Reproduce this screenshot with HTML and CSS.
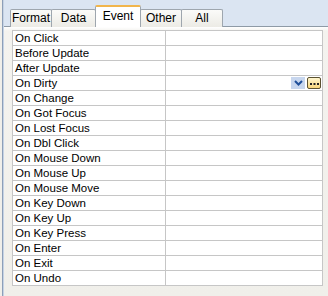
FILE: index.html
```html
<!DOCTYPE html>
<html lang="en">
<head>
    <meta charset="UTF-8">
    <title>Property Sheet - Event</title>
    <link rel="stylesheet" href="styles.css">
</head>
<body>
    <div class="sheet">
        <!-- tabs -->
        <div class="tabs">
            <div class="tab">Format</div>
            <div class="tab">Data</div>
            <div class="tab active">Event</div>
            <div class="tab">Other</div>
            <div class="tab">All</div>
        </div>

        <!-- property grid -->
        <div class="panel">
            <table class="grid">
                <tr><td class="name">On Click</td><td class="value"></td></tr>
                <tr><td class="name">Before Update</td><td class="value"></td></tr>
                <tr><td class="name">After Update</td><td class="value"></td></tr>
                <tr>
                    <td class="name">On Dirty</td>
                    <td class="value">
                        <div class="editor">
                            <span class="drop">
                                <svg width="9" height="6" viewBox="0 0 9 6"><path d="M1 1 L4.5 4.5 L8 1" fill="none" stroke="#1f4f9a" stroke-width="2"/></svg>
                            </span>
                            <span class="build">
                                <svg width="9" height="3" viewBox="0 0 9 3"><rect x="0" y="1" width="2" height="2" fill="#222"/><rect x="3.5" y="1" width="2" height="2" fill="#222"/><rect x="7" y="1" width="2" height="2" fill="#222"/></svg>
                            </span>
                        </div>
                    </td>
                </tr>
                <tr><td class="name">On Change</td><td class="value"></td></tr>
                <tr><td class="name">On Got Focus</td><td class="value"></td></tr>
                <tr><td class="name">On Lost Focus</td><td class="value"></td></tr>
                <tr><td class="name">On Dbl Click</td><td class="value"></td></tr>
                <tr><td class="name">On Mouse Down</td><td class="value"></td></tr>
                <tr><td class="name">On Mouse Up</td><td class="value"></td></tr>
                <tr><td class="name">On Mouse Move</td><td class="value"></td></tr>
                <tr><td class="name">On Key Down</td><td class="value"></td></tr>
                <tr><td class="name">On Key Up</td><td class="value"></td></tr>
                <tr><td class="name">On Key Press</td><td class="value"></td></tr>
                <tr><td class="name">On Enter</td><td class="value"></td></tr>
                <tr><td class="name">On Exit</td><td class="value"></td></tr>
                <tr><td class="name">On Undo</td><td class="value"></td></tr>
            </table>
        </div>
    </div>
</body>
</html>
```

FILE: styles.css
```css
body {
    margin: 0;
    width: 328px;
    height: 296px;
    overflow: hidden;
    background: #f0efea;
    font-family: "Liberation Sans", Arial, sans-serif;
    font-size: 11.5px;
    color: #000;
}

.sheet {
    height: 296px;
    margin-left: 2px;
    border-left: 1px solid #8d9fb8;
    padding-left: 1px;
    box-shadow: inset 1px 0 0 #c6d3e4;
    display: flex;
    flex-direction: column;
}

.tabs {
    height: 26px;
    background: #dbe5f2;
    display: flex;
    align-items: flex-end;
    padding-left: 6px;
    border-bottom: 1px solid #8e9aa6;
}

.tab {
    box-sizing: border-box;
    height: 18px;
    line-height: 17px;
    margin-right: -1px;
    border: 1px solid #9ea6ae;
    border-bottom: none;
    border-radius: 2px 2px 0 0;
    background: linear-gradient(#fbfbf9, #ecebe5);
    font-size: 12px;
    text-align: center;
    position: relative;
    top: 1px;
}

.tab:nth-child(1) { width: 42px; }
.tab:nth-child(2) { width: 45px; }
.tab:nth-child(3) { width: 46px; }
.tab:nth-child(4) { width: 42px; }
.tab:nth-child(5) { width: 42px; }

.tab.active {
    height: 22px;
    line-height: 18px;
    background: #ffffff;
    border-top: 2px solid #f1b54c;
    border-color: #f1b54c #9ea6ae #9ea6ae;
    z-index: 1;
}

.panel {
    flex: 1;
    padding: 3px 5px 0 8px;
    background: linear-gradient(#ffffff 0, #f4f3ef 4px, #f0efea 100%);
}

.grid {
    width: 311px;
    border-collapse: collapse;
    background: #fff;
    border: 1px solid #a0a0a0;
}

.grid td {
    height: 14px;
    padding: 0 0 0 2px;
    border: 1px solid #c6c6c6;
    line-height: 14px;
    white-space: nowrap;
}

.grid .name {
    width: 150px;
}

.editor {
    display: flex;
    justify-content: flex-end;
    gap: 2px;
    padding-right: 1px;
}

.drop {
    width: 14px;
    height: 12px;
    background: #c7d6ee;
    display: flex;
    align-items: center;
    justify-content: center;
}

.build {
    width: 12px;
    height: 10px;
    border: 1px solid #5b5130;
    border-radius: 2px;
    background: linear-gradient(#fff6cf, #f7d67d);
    display: flex;
    align-items: center;
    justify-content: center;
}
```
